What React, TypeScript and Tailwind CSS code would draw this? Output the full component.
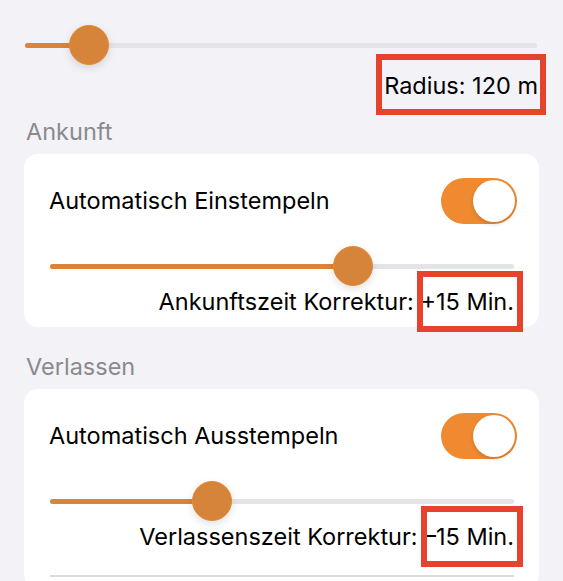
import clsx from "clsx";

const font = { fontFamily: "Inter, 'Noto Sans', sans-serif" };

function Slider({ value }: { value: number }) {
  // thumb travels between the track ends, keeping its radius inside
  const pos = `calc(20px + ${value} * (100% - 40px))`;
  return (
    <div className="relative flex h-10 items-center">
      <div className="h-[5px] w-full rounded-full bg-[#e3e3e8]" />
      <div
        className="absolute left-0 h-[5px] rounded-full bg-[#d9843a]"
        style={{ width: pos }}
      />
      <div
        className="absolute top-0 size-10 -translate-x-1/2 rounded-full border border-[#e38b35] bg-[#d6843a] shadow-[0_3px_8px_rgba(0,0,0,0.12)]"
        style={{ left: pos }}
      />
    </div>
  );
}

function Toggle() {
  return (
    <div className="flex h-[46px] w-[76px] items-center justify-end rounded-full bg-[#ef8a31] p-[2px]">
      <div className="size-[42px] rounded-full bg-white shadow-[0_2px_4px_rgba(0,0,0,0.15)]" />
    </div>
  );
}

function Marked({ children, className }: { children: React.ReactNode; className?: string }) {
  return (
    <span className="relative">
      {children}
      <span className={clsx("pointer-events-none absolute border-[6px] border-[#e5432b]", className)} />
    </span>
  );
}

function Section({
  title,
  toggle,
  value,
  label,
  amount,
  divider,
}: {
  title: string;
  toggle: string;
  value: number;
  label: string;
  amount: string;
  divider?: boolean;
}) {
  return (
    <section className="flex flex-col">
      <h2 className="h-7 pl-[2px] text-[23.5px] leading-7 text-[#8a8a8e]">{title}</h2>
      <div className="mt-2 flex flex-col rounded-[14px] bg-white pt-6 pb-[11px] pl-[25px] pr-[22px]">
        <div className="flex items-center justify-between">
          <span className="text-[23.5px] text-black">{toggle}</span>
          <Toggle />
        </div>
        <div className="mt-[22px] pl-px pr-[3px]">
          <Slider value={value} />
        </div>
        <p className="mt-[2px] pr-[3px] text-right text-[23.5px] leading-7 text-black">
          {label}{" "}
          <Marked className="-top-[16px] -bottom-[16px] -left-[3px] -right-[9px]">{amount}</Marked>
        </p>
        {divider && <div className="mt-[24px] ml-px mr-[3px] h-[2px] bg-[#dcdcdf]" />}
      </div>
    </section>
  );
}

export default function App() {
  return (
    <main className="flex h-[581px] w-[563px] flex-col overflow-hidden bg-[#f2f2f7] px-6" style={font}>
      <div className="mt-[25px] pl-px pr-[2px]">
        <Slider value={0.094} />
      </div>
      <p className="mt-[7px] pr-[1px] text-right text-[23.5px] leading-7 text-black">
        <Marked className="-top-[17px] -bottom-[15px] -left-[8px] -right-[8px]">Radius: 120 m</Marked>
      </p>
      <div className="mt-[18px]">
        <Section
          title="Ankunft"
          toggle="Automatisch Einstempeln"
          value={0.668}
          label="Ankunftszeit Korrektur:"
          amount="+15 Min."
        />
      </div>
      <div className="mt-[26px]">
        <Section
          title="Verlassen"
          toggle="Automatisch Ausstempeln"
          value={0.336}
          label="Verlassenszeit Korrektur:"
          amount="–15 Min."
          divider
        />
      </div>
    </main>
  );
}
